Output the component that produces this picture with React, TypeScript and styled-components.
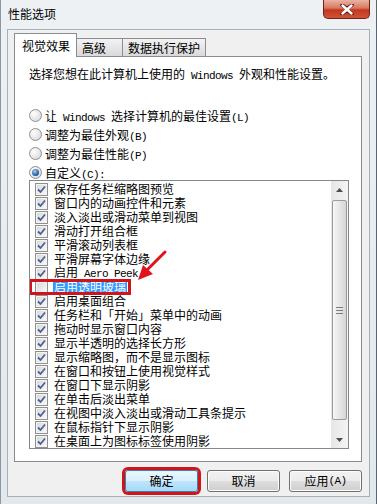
import React from "react";
import styled, { createGlobalStyle } from "styled-components";

const GlobalStyle = createGlobalStyle`
  html, body {
    margin: 0;
    padding: 0;
    background: #fff;
  }
  body {
    font-family: "Noto Sans CJK SC", "Liberation Sans", sans-serif;
    font-size: 12px;
    color: #000;
  }
`;

const Window = styled.div`
  width: 377px;
  height: 504px;
  box-sizing: border-box;
  display: flex;
  flex-direction: column;
  background: linear-gradient(#eef1f4, #e3e8ed);
  border-left: 1px solid #8d97a1;
  border-right: 1px solid #5b6570;
`;

const TitleBar = styled.div`
  height: 29px;
  flex: none;
  display: flex;
  justify-content: space-between;
  align-items: flex-start;
`;

const Title = styled.div`
  padding: 7px 0 0 7px;
  line-height: 14px;
  font-size: 12px;
`;

const CloseButton = styled.div`
  width: 47px;
  height: 19px;
  margin-right: 6px;
  box-sizing: border-box;
  border: 1px solid #6b2419;
  border-top: none;
  border-radius: 0 0 5px 5px;
  background: linear-gradient(#eab3a4 0%, #d9775f 45%, #c2381e 55%, #d2523a 100%);
  display: flex;
  align-items: center;
  justify-content: center;
`;

const Client = styled.div`
  flex: 1;
  margin: 0 6px 7px 6px;
  border: 1px solid #a6b0ba;
  background: #f0f0f0;
  display: flex;
  flex-direction: column;
  padding: 3px 7px 0 6px;
`;

const TabStrip = styled.div`
  height: 24px;
  display: flex;
  align-items: flex-end;
  position: relative;
  z-index: 1;
  margin-bottom: -1px;
`;

const Tab = styled.div<{ $active?: boolean; $w: number }>`
  box-sizing: border-box;
  width: ${(p) => p.$w}px;
  height: ${(p) => (p.$active ? 24 : 18)}px;
  margin-bottom: ${(p) => (p.$active ? 0 : 1)}px;
  margin-left: ${(p) => (p.$active ? 0 : -1)}px;
  border: 1px solid #898c95;
  border-bottom: none;
  background: ${(p) => (p.$active ? "#fff" : "linear-gradient(#f3f3f3, #e6e6e6 50%, #d9d9d9)")};
  display: flex;
  align-items: center;
  padding-left: ${(p) => (p.$active ? 7 : 5)}px;
  line-height: 14px;
`;

const Panel = styled.div`
  flex: none;
  height: 406px;
  box-sizing: border-box;
  border: 1px solid #898c95;
  background: #fff;
  padding: 10px 0 0 14px;
`;

const Description = styled.div`
  line-height: 14px;
  margin-bottom: 24px;
  white-space: nowrap;
`;

const RadioGroup = styled.div`
  display: flex;
  flex-direction: column;
  gap: 3px;
`;

const RadioRow = styled.div`
  height: 16px;
  display: flex;
  align-items: center;
  gap: 3px;
  white-space: nowrap;
`;

const RadioCircle = styled.span<{ $checked?: boolean }>`
  width: 13px;
  height: 13px;
  box-sizing: border-box;
  border-radius: 50%;
  border: 1px solid #8f8f8f;
  background: radial-gradient(circle at 35% 35%, #fff, #d2d2d2);
  display: flex;
  align-items: center;
  justify-content: center;
  &::after {
    content: "";
    display: ${(p) => (p.$checked ? "block" : "none")};
    width: 7px;
    height: 7px;
    border-radius: 50%;
    background: radial-gradient(circle at 40% 35%, #a8d4f4, #2f66ad 55%, #153e7c);
  }
`;

const ListBox = styled.div`
  width: 320px;
  height: 269px;
  box-sizing: border-box;
  border: 1px solid #828790;
  background: #fff;
  display: flex;
  position: relative;
`;

const Items = styled.div`
  flex: 1;
  padding-top: 1px;
  overflow: hidden;
`;

const ItemRow = styled.div`
  height: 14px;
  display: flex;
  align-items: center;
  gap: 6px;
  padding-left: 5px;
  position: relative;
  white-space: nowrap;
  line-height: 14px;
`;

const CheckBox = styled.span`
  width: 13px;
  height: 13px;
  flex: none;
  box-sizing: border-box;
  border: 1px solid #8f8f8f;
  background: linear-gradient(135deg, #d6d6d6, #fbfbfb);
  box-shadow: inset 0 0 0 1px #f4f4f4;
  display: flex;
  align-items: center;
  justify-content: center;
`;

const Selected = styled.span`
  background: #3399ff;
  color: #fff;
  padding: 0 1px;
  margin-left: -1px;
`;

const Marker = styled.span`
  position: absolute;
  left: -1px;
  top: -1px;
  width: 102px;
  height: 16px;
  box-sizing: border-box;
  border: 3px solid #d0141c;
  pointer-events: none;
`;

const Pointer = styled.svg`
  position: absolute;
  left: 104px;
  top: 68px;
`;

const ScrollBar = styled.div`
  width: 17px;
  flex: none;
  display: flex;
  flex-direction: column;
  background: linear-gradient(to right, #e6e6e6, #f4f4f4);
`;

const ArrowButton = styled.div`
  height: 17px;
  flex: none;
  display: flex;
  align-items: center;
  justify-content: center;
`;

const Track = styled.div`
  flex: 1;
  display: flex;
  padding: 2px 0 11px;
`;

const Thumb = styled.div`
  flex: 1;
  margin: 0 1px;
  border: 1px solid #9b9b9b;
  border-radius: 2px;
  background: linear-gradient(to right, #f6f6f6, #e6e6e6 50%, #d6d6d6);
  display: flex;
  align-items: center;
  justify-content: center;
`;

const Grip = styled.div`
  width: 7px;
  height: 7px;
  background: repeating-linear-gradient(#7d7d7d 0 1px, transparent 1px 3px);
`;

const Latin = styled.span`
  font-family: "Liberation Mono", monospace;
  font-size: 11px;
  letter-spacing: -0.6px;
`;

const ButtonRow = styled.div`
  display: flex;
  justify-content: flex-end;
  gap: 9px;
  margin-top: 8px;
`;

const Button = styled.div<{ $primary?: boolean }>`
  width: 73px;
  height: 22px;
  box-sizing: border-box;
  border: 1px solid ${(p) => (p.$primary ? "#3c7fb1" : "#707070")};
  border-radius: 3px;
  background: ${(p) =>
    p.$primary
      ? "linear-gradient(#eaf6fd, #d9f0fc 50%, #bee6fd 51%, #a7d9f5)"
      : "linear-gradient(#f2f2f2, #ebebeb 50%, #dddddd 51%, #cfcfcf)"};
  box-shadow: ${(p) => (p.$primary ? "0 0 0 3px #d0141c" : "inset 0 0 0 1px #fcfcfc")};
  display: flex;
  align-items: center;
  justify-content: center;
  line-height: 14px;
`;

const Mixed = ({ text }: { text: string }) => {
  const parts = text.split(/([\x20-\x7e]+)/);
  return (
    <>
      {parts.map((p, i) => (/[\x20-\x7e]/.test(p) ? <Latin key={i}>{p}</Latin> : p))}
    </>
  );
};

const effects: { label: string; checked: boolean; selected?: boolean }[] = [
  { label: "保存任务栏缩略图预览", checked: true },
  { label: "窗口内的动画控件和元素", checked: true },
  { label: "淡入淡出或滑动菜单到视图", checked: true },
  { label: "滑动打开组合框", checked: true },
  { label: "平滑滚动列表框", checked: true },
  { label: "平滑屏幕字体边缘", checked: true },
  { label: "启用 Aero Peek", checked: true },
  { label: "启用透明玻璃", checked: false, selected: true },
  { label: "启用桌面组合", checked: true },
  { label: "任务栏和「开始」菜单中的动画", checked: true },
  { label: "拖动时显示窗口内容", checked: true },
  { label: "显示半透明的选择长方形", checked: true },
  { label: "显示缩略图，而不是显示图标", checked: true },
  { label: "在窗口和按钮上使用视觉样式", checked: true },
  { label: "在窗口下显示阴影", checked: true },
  { label: "在单击后淡出菜单", checked: true },
  { label: "在视图中淡入淡出或滑动工具条提示", checked: true },
  { label: "在鼠标指针下显示阴影", checked: true },
  { label: "在桌面上为图标标签使用阴影", checked: true },
];

const radios = [
  { label: "让 Windows 选择计算机的最佳设置(L)", checked: false },
  { label: "调整为最佳外观(B)", checked: false },
  { label: "调整为最佳性能(P)", checked: false },
  { label: "自定义(C):", checked: true },
];

const Check = () => (
  <svg width="9" height="9" viewBox="0 0 9 9">
    <path d="M1 4.5 L3.5 7 L8 1.5" fill="none" stroke="#4b6193" strokeWidth="1.8" />
  </svg>
);

export default function App() {
  return (
    <>
      <GlobalStyle />
      <Window>
        <TitleBar>
          <Title>性能选项</Title>
          <CloseButton>
            <svg width="14" height="11" viewBox="0 0 14 11">
              <path
                d="M2 1 L7 4.5 L12 1 M2 10 L7 6.5 L12 10"
                fill="none"
                stroke="#5a1a10"
                strokeWidth="3.6"
                strokeLinecap="round"
              />
              <path
                d="M2.5 1.5 L11.5 9.5 M11.5 1.5 L2.5 9.5"
                fill="none"
                stroke="#fff"
                strokeWidth="2.4"
                strokeLinecap="round"
              />
            </svg>
          </CloseButton>
        </TitleBar>
        <Client>
          <TabStrip>
            <Tab $active $w={63}>视觉效果</Tab>
            <Tab $w={47}>高级</Tab>
            <Tab $w={84}>数据执行保护</Tab>
          </TabStrip>
          <Panel>
            <Description>
              <Mixed text="选择您想在此计算机上使用的 Windows 外观和性能设置。" />
            </Description>
            <RadioGroup>
              {radios.map((r) => (
                <RadioRow key={r.label}>
                  <RadioCircle $checked={r.checked} />
                  <span>
                    <Mixed text={r.label} />
                  </span>
                </RadioRow>
              ))}
            </RadioGroup>
            <ListBox>
              <Items>
                {effects.map((e) => (
                  <ItemRow key={e.label}>
                    <CheckBox>{e.checked && <Check />}</CheckBox>
                    {e.selected ? (
                      <Selected>{e.label}</Selected>
                    ) : (
                      <span>
                        <Mixed text={e.label} />
                      </span>
                    )}
                    {e.selected && <Marker />}
                  </ItemRow>
                ))}
              </Items>
              <ScrollBar>
                <ArrowButton>
                  <svg width="7" height="4" viewBox="0 0 7 4">
                    <path d="M0 4 L3.5 0 L7 4 Z" fill="#4d4d4d" />
                  </svg>
                </ArrowButton>
                <Track>
                  <Thumb>
                    <Grip />
                  </Thumb>
                </Track>
                <ArrowButton>
                  <svg width="7" height="4" viewBox="0 0 7 4">
                    <path d="M0 0 L3.5 4 L7 0 Z" fill="#4d4d4d" />
                  </svg>
                </ArrowButton>
              </ScrollBar>
              <Pointer width="36" height="36" viewBox="0 0 36 36">
                <path d="M31 3 L12 22" stroke="#e0141c" strokeWidth="3" strokeLinecap="round" />
                <path d="M4 31 L9 16 L19 25 Z" fill="#e0141c" />
              </Pointer>
            </ListBox>
          </Panel>
          <ButtonRow>
            <Button $primary>确定</Button>
            <Button>取消</Button>
            <Button>
              <Mixed text="应用(A)" />
            </Button>
          </ButtonRow>
        </Client>
      </Window>
    </>
  );
}
